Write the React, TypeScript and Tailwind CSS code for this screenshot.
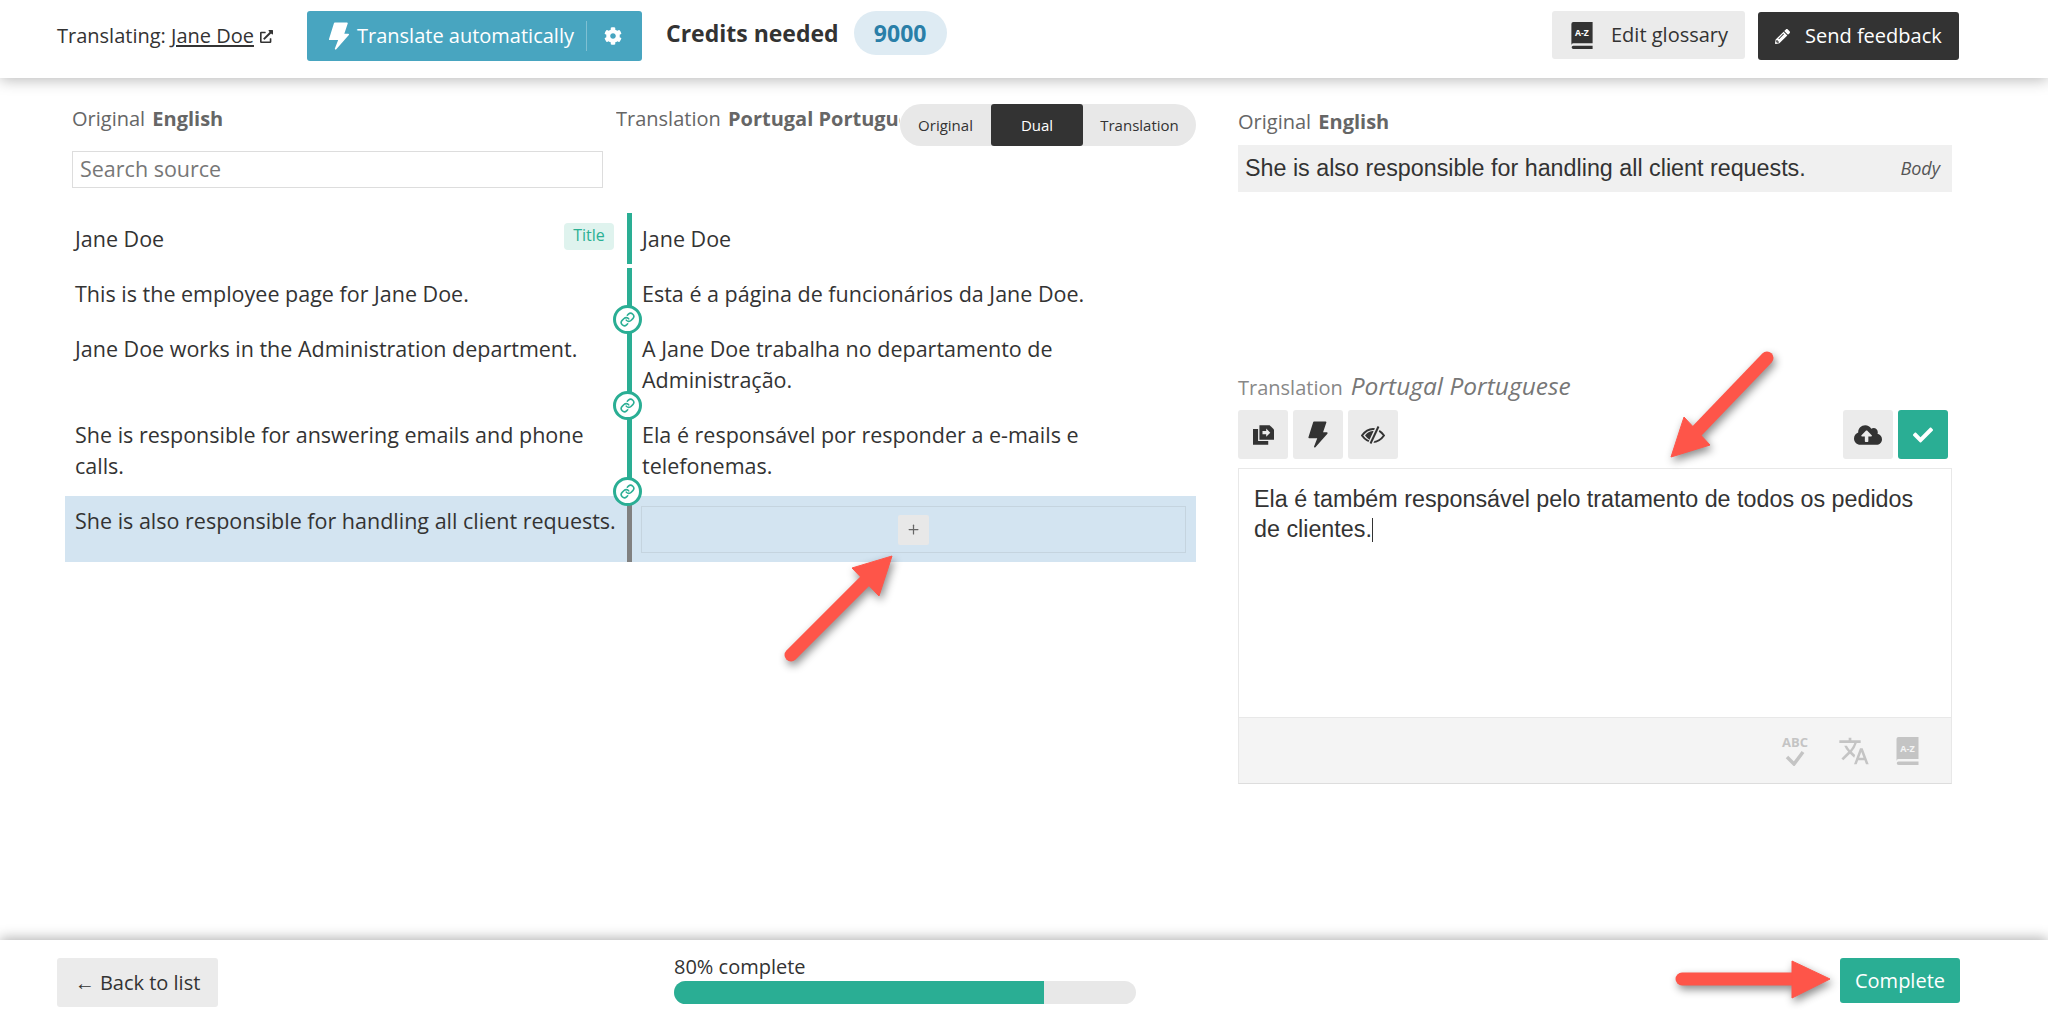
import React from 'react';
import { Link as LinkIcon, Plus } from 'lucide-react';
import { FaCog, FaCheck, FaCloudUploadAlt, FaExternalLinkAlt, FaPencilAlt } from 'react-icons/fa';
import { MdTranslate } from 'react-icons/md';

const sans = "font-['Open_Sans',sans-serif]";
const helv = "font-['Liberation_Sans',Arial,sans-serif]";

const BookIcon: React.FC<{ color: string; letter: string; className: string }> = ({ color, letter, className }) => (
  <svg viewBox="0 0 22 28" className={className}>
    <path d="M0 2a2 2 0 0 1 2-2h20v22H2a2 2 0 0 0-2 2z" fill={color} />
    <path d="M2 24.500h20v3.500H2a1.750 1.750 0 0 1 0-3.500z" fill={color} />
    <text x="11" y="14.500" fontSize="9" fontWeight="700" textAnchor="middle" fill={letter} fontFamily="Open Sans">A-Z</text>
  </svg>
);

const BoltIcon: React.FC<{ className: string }> = ({ className }) => (
  <svg viewBox="0 0 50 67" className={className} fill="currentColor" stroke="currentColor" strokeWidth="4" strokeLinejoin="round">
    <polygon points="15,3 44,3 35,30 47,30 17,64 26,41 3,41" />
  </svg>
);

const CopyIcon = () => (
  <svg viewBox="0 0 62 58" className="w-[21px] h-[20px]" fill="#333">
    <path d="M0 11h15v36h30v11H0z" />
    <path d="M19 0h30l13 13v30H19z" />
    <path d="M28 17h11v-7l12 12-12 12v-7H28z" fill="#ebebeb" />
  </svg>
);

const EyeOffIcon = () => (
  <svg viewBox="0 0 24 18" className="w-[24px] h-[18px]" fill="none" stroke="#333" strokeWidth="2">
    <path d="M1 9.500C5 4 9 3 12 3s7 1 11 6.500C19 15 15 16 12 16S5 15 1 9.500z" />
    <path d="M4 9.500C7 6 9 5 13 5l-4 9C7 13 5.500 11 4 9.500z" fill="#333" stroke="none" />
    <path d="M17.500 0.500L9.500 17.500" stroke="#ebebeb" strokeWidth="5" />
    <path d="M17.500 0.500L9.500 17.500" strokeWidth="2" />
  </svg>
);

const Connector = () => (
  <div className="absolute right-[-15px] bottom-[-11px] z-10 w-[29px] h-[29px] rounded-full bg-white border-[3px] border-[#2aae94] flex items-center justify-center">
    <LinkIcon className="w-[15px] h-[15px] text-[#2aae94]" strokeWidth={2.5} />
  </div>
);

const rows = [
  { source: 'This is the employee page for Jane Doe.', target: 'Esta é a página de funcionários da Jane Doe.' },
  { source: 'Jane Doe works in the Administration department.', target: 'A Jane Doe trabalha no departamento de Administração.' },
  { source: 'She is responsible for answering emails and phone calls.', target: 'Ela é responsável por responder a e-mails e telefonemas.' },
];

const App: React.FC = () => {
  return (
    <div className={`${sans} relative w-[2048px] h-[1024px] overflow-hidden bg-white flex flex-col text-[#333]`}>
      <header className="relative z-20 h-[78px] shrink-0 bg-white shadow-[0_2px_14px_rgba(0,0,0,0.28)] flex items-start pl-[57px] pr-[89px] pt-[11px]">
        <div className="flex items-center h-[50px] text-[20px] w-[250px] whitespace-nowrap">
          Translating:&nbsp;<span className="underline underline-offset-2">Jane Doe</span>
          <FaExternalLinkAlt className="ml-[6px] w-[13px] h-[13px]" />
        </div>
        <div className="w-[335px] h-[50px] rounded-[3px] bg-[#48a5c0] text-white flex items-center pl-[21px] text-[20px] whitespace-nowrap">
          <BoltIcon className="w-[22px] h-[28px] mr-[7px]" />
          <span className="w-[215px]">Translate automatically</span>
          <span className="w-px h-[30px] bg-white/30 ml-[14px]" />
          <FaCog className="w-[18px] h-[18px] ml-[17px]" />
        </div>
        <div className="ml-[24px] font-bold text-[23px] h-[44px] flex items-center">Credits needed</div>
        <div className="ml-[15px] w-[93px] h-[44px] rounded-full bg-[#deebf3] text-[#2a7fa8] font-bold text-[23px] flex items-center justify-center">9000</div>
        <div className="ml-auto w-[193px] h-[48px] rounded-[3px] bg-[#ebebeb] flex items-center pl-[19px] text-[20px]">
          <BookIcon color="#333" letter="#fff" className="w-[22px] h-[27px] mr-[18px]" />
          Edit glossary
        </div>
        <div className="ml-[13px] mt-px w-[201px] h-[48px] rounded-[3px] bg-[#333] text-white flex items-center pl-[17px] text-[20px]">
          <FaPencilAlt className="w-[15px] h-[15px] mr-[15px]" />
          Send feedback
        </div>
      </header>

      <main className="flex-1 flex pl-[65px] min-h-0">
        <section className="relative w-[1131px] shrink-0">
          <div className="flex h-[135px]">
            <div className="w-[551px] pl-[7px] pr-[13px] pt-[29px]">
              <div className="text-[20px] leading-[24px] text-[#666]">Original <b className="ml-[2px]">English</b></div>
              <div className="mt-[20px] h-[37px] border border-[#ddd] flex items-center pl-[7px] text-[21.5px] text-[#777]">Search source</div>
            </div>
            <div className="w-[284px] h-[60px] overflow-hidden pt-[29px] text-[20px] leading-[24px] text-[#666] whitespace-nowrap">Translation <b className="ml-[2px]">Portugal Portuguese</b></div>
          </div>
          <div className="absolute left-[835px] top-[26px] w-[296px] h-[42px] rounded-full bg-[#e8e8e8] flex items-center text-[15px] overflow-hidden">
            <span className="w-[91px] text-center">Original</span>
            <span className="w-[92px] h-full rounded-[3px] bg-[#333] text-white flex items-center justify-center">Dual</span>
            <span className="flex-1 text-center">Translation</span>
          </div>

          <div className="text-[21.5px] leading-[31px]">
            <div className="flex">
              <div className="relative w-[562px] pl-[10px] pr-[10px] pt-[10px] pb-[10px]">
                Jane Doe
                <span className="absolute right-[13px] top-[10px] h-[27px] w-[50px] rounded-[4px] bg-[#dff3ee] text-[#2bb094] text-[16px] leading-[25px] text-center">Title</span>
              </div>
              <div className="flex-1 border-l-[5px] border-[#2aae94] pl-[10px] pr-[10px] pt-[10px] pb-[10px]">Jane Doe</div>
            </div>
            <div className="h-[4px]" />
            {rows.map((row) => (
              <div key={row.source} className="flex">
                <div className="relative w-[562px] pl-[10px] pr-[10px] pt-[10px] pb-[14px]">
                  {row.source}
                  <Connector />
                </div>
                <div className="flex-1 border-l-[5px] border-[#2aae94] pl-[10px] pr-[10px] pt-[10px] pb-[14px]">{row.target}</div>
              </div>
            ))}
            <div className="flex mt-px h-[66px] bg-[#d3e4f1]">
              <div className="w-[562px] pl-[10px] pt-[9px] whitespace-nowrap">She is also responsible for handling all client requests.</div>
              <div className="flex-1 border-l-[5px] border-[#808080] pl-[9px] pr-[10px] pt-[10px] pb-[9px]">
                <div className="h-full border border-[#c5d4df] flex items-center justify-center">
                  <div className="w-[31px] h-[30px] rounded-[2px] bg-[#e8e8e8] flex items-center justify-center">
                    <Plus className="w-[15px] h-[15px] text-[#666]" />
                  </div>
                </div>
              </div>
            </div>
          </div>
        </section>

        <section className="ml-[42px] w-[714px] shrink-0 pt-[32px]">
          <div className="text-[20px] leading-[24px] text-[#666]">Original <b className="ml-[2px]">English</b></div>
          <div className={`mt-[11px] h-[47px] bg-[#f0f0f0] flex items-center justify-between pl-[7px] pr-[12px] ${helv} text-[23.3px]`}>
            She is also responsible for handling all client requests.
            <i className={`${sans} text-[18px] text-[#555]`}>Body</i>
          </div>
          <div className="mt-[176px] flex items-baseline h-[30px]">
            <span className="text-[20px] text-[#888]">Translation</span>
            <i className="ml-[8px] text-[24.5px] text-[#777]">Portugal Portuguese</i>
          </div>
          <div className="mt-[12px] flex gap-[5px] pr-[4px]">
            <div className="w-[50px] h-[49px] rounded-[3px] bg-[#ebebeb] flex items-center justify-center"><CopyIcon /></div>
            <div className="w-[50px] h-[49px] rounded-[3px] bg-[#ebebeb] flex items-center justify-center text-[#333]"><BoltIcon className="w-[20px] h-[27px]" /></div>
            <div className="w-[50px] h-[49px] rounded-[3px] bg-[#ebebeb] flex items-center justify-center"><EyeOffIcon /></div>
            <div className="ml-auto w-[50px] h-[49px] rounded-[3px] bg-[#ebebeb] flex items-center justify-center"><FaCloudUploadAlt className="w-[28px] h-[26px]" /></div>
            <div className="w-[50px] h-[49px] rounded-[3px] bg-[#2aae94] text-white flex items-center justify-center"><FaCheck className="w-[20px] h-[20px]" /></div>
          </div>
          <div className="mt-[9px] h-[316px] border border-[#e8e8e8] border-b-[#ddd] flex flex-col">
            <div className={`flex-1 pl-[15px] pr-[25px] pt-[15px] ${helv} text-[23.3px] leading-[30px]`}>
              Ela é também responsável pelo tratamento de todos os pedidos de clientes.<span className="inline-block w-px h-[24px] bg-[#333] align-[-5px]" />
            </div>
            <div className="h-[66px] bg-[#f4f4f4] border-t border-[#e8e8e8] flex items-center justify-end pr-[32px] text-[#c4c4c4]">
              <div className="w-[24px] flex flex-col items-center mr-[31px]">
                <span className="text-[13px] leading-[14px] font-bold">ABC</span>
                <svg viewBox="0 0 20 16" className="w-[20px] h-[16px] mt-px" fill="none" stroke="currentColor" strokeWidth="3.500"><path d="M2 7l7 7L18 2" /></svg>
              </div>
              <MdTranslate className="w-[32px] h-[32px] mr-[26px]" />
              <BookIcon color="#c4c4c4" letter="#f4f4f4" className="w-[23px] h-[28px]" />
            </div>
          </div>
        </section>
      </main>

      <footer className="relative z-20 h-[84px] shrink-0 bg-white shadow-[0_-2px_12px_rgba(0,0,0,0.3)] flex items-start pl-[57px] pr-[88px] pt-[18px]">
        <div className="w-[161px] h-[49px] rounded-[3px] bg-[#ebebeb] flex items-center justify-center text-[20px]">← Back to list</div>
        <div className="ml-[456px] w-[462px] -mt-[3px]">
          <div className="text-[20px] leading-[24px]">80% complete</div>
          <div className="mt-[2px] h-[23px] rounded-full bg-[#e8e8e8] overflow-hidden">
            <div className="h-full w-[370px] bg-[#2aae94]" />
          </div>
        </div>
        <div className="ml-auto w-[120px] h-[45px] rounded-[3px] bg-[#2aae94] text-white flex items-center justify-center text-[20px]">Complete</div>
      </footer>

      {/* red callout arrows on top of the screenshot */}
      <svg className="absolute inset-0 z-30 w-full h-full pointer-events-none drop-shadow-[2px_4px_4px_rgba(0,0,0,0.45)]" viewBox="0 0 2048 1024">
        <g fill="#fe5549" stroke="#fe5549">
          <line x1="791" y1="655" x2="868" y2="578" strokeWidth="13" strokeLinecap="round" />
          <polygon points="892,556 852,568 879,596" />
          <line x1="1767" y1="358" x2="1695" y2="433" strokeWidth="13" strokeLinecap="round" />
          <polygon points="1671,457 1684,417 1710,445" />
          <line x1="1682" y1="979" x2="1795" y2="979" strokeWidth="13" strokeLinecap="round" />
          <polygon points="1830,979 1792,961 1792,998" />
        </g>
      </svg>
    </div>
  );
};

export default App;
